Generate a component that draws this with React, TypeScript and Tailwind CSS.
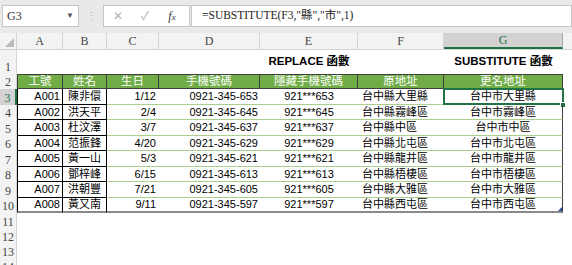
const SANS = "font-['Liberation_Sans','Noto_Sans_CJK_TC',sans-serif]"
const SERIF = "font-['Liberation_Serif','Noto_Sans_CJK_TC',serif]"

const COLS = [
  { key: 'A', w: 'w-[46px]' },
  { key: 'B', w: 'w-[44px]' },
  { key: 'C', w: 'w-[52px]' },
  { key: 'D', w: 'w-[101px]' },
  { key: 'E', w: 'w-[98px]' },
  { key: 'F', w: 'w-[86px]' },
  { key: 'G', w: 'w-[119px]' },
]

const HEADERS = ['工號', '姓名', '生日', '手機號碼', '隱藏手機號碼', '原地址', '更名地址']

const ROWS = [
  ['A001', '陳非儇', '1/12', '0921-345-653', '921***653', '台中縣大里縣', '台中市大里縣'],
  ['A002', '洪天平', '2/4', '0921-345-645', '921***645', '台中縣霧峰區', '台中市霧峰區'],
  ['A003', '杜汶澤', '3/7', '0921-345-637', '921***637', '台中縣中區', '台中市中區'],
  ['A004', '范振鋒', '4/20', '0921-345-629', '921***629', '台中縣北屯區', '台中市北屯區'],
  ['A005', '黃一山', '5/3', '0921-345-621', '921***621', '台中縣龍井區', '台中市龍井區'],
  ['A006', '鄧梓峰', '6/15', '0921-345-613', '921***613', '台中縣梧棲區', '台中市梧棲區'],
  ['A007', '洪朝豐', '7/21', '0921-345-605', '921***605', '台中縣大雅區', '台中市大雅區'],
  ['A008', '黃又南', '9/11', '0921-345-597', '921***597', '台中縣西屯區', '台中市西屯區'],
]

// row heights for rows 3..10 then 11..14
const DATA_H = ['h-[16px]', 'h-[15px]', 'h-[16px]', 'h-[15px]', 'h-[16px]', 'h-[15px]', 'h-[16px]', 'h-[15px]']
const EMPTY_H = ['h-[16px]', 'h-[15px]', 'h-[15px]', 'h-[15px]']

function RowHead({ n, h, active }: { n: number; h: string; active?: boolean }) {
  return (
    <div
      className={`w-[17px] shrink-0 ${h} flex items-end justify-center text-[12px] leading-[14px] ${SERIF} ${
        active
          ? 'bg-[#d2d2d2] text-[#217346] border-r-2 border-[#217346]'
          : 'bg-[#f3f3f3] text-[#444] border-r border-[#d4d4d4]'
      }`}
    >
      {n}
    </div>
  )
}

function FormulaBar() {
  return (
    <div className="h-[33px] bg-[#e9e9e9] flex items-start pt-[5px] pl-[2px]">
      <div className="w-[77px] h-[22px] bg-white border border-[#c6c6c6] flex items-center justify-between pl-[4px] pr-[4px]">
        <span className={`text-[12px] text-[#333] ${SERIF}`}>G3</span>
        <span className="text-[8px] text-[#555]">▼</span>
      </div>
      <div className="w-[24px] h-[22px] flex items-center justify-center text-[11px] text-[#b5b5b5]">⋮</div>
      <div className="w-[87px] h-[22px] bg-white border border-[#c6c6c6] flex items-center">
        <span className="w-[28px] text-center text-[12px] text-[#b0b0b0]">✕</span>
        <span className="w-[26px] text-center text-[12px] text-[#b0b0b0]">✓</span>
        <span className={`w-[28px] text-center text-[12px] text-[#333] italic ${SERIF}`}>
          f<span className="text-[9px]">x</span>
        </span>
      </div>
      <div className="flex-1 h-[22px] ml-[1px] bg-white border border-[#c6c6c6] flex items-center pl-[10px]">
        <span className={`text-[11.5px] text-[#222] ${SERIF}`}>=SUBSTITUTE(F3,"縣","市",1)</span>
      </div>
    </div>
  )
}

function ColumnHeads() {
  return (
    <div className={`h-[17px] flex bg-[#f3f3f3] border-b border-[#d4d4d4] ${SERIF}`}>
      <div className="w-[17px] shrink-0 border-r border-[#d4d4d4] relative">
        <div className="absolute right-[2px] bottom-[2px] w-0 h-0 border-l-[9px] border-l-transparent border-b-[9px] border-b-[#b9b9b9]" />
      </div>
      {COLS.map(c => (
        <div
          key={c.key}
          className={`${c.w} shrink-0 flex items-center justify-center text-[12px] border-r ${
            c.key === 'G'
              ? 'bg-[#d2d2d2] text-[#217346] border-[#ababab] border-b-2 border-b-[#217346]'
              : 'text-[#444] border-[#d4d4d4]'
          }`}
        >
          {c.key}
        </div>
      ))}
      <div className="flex-1" />
    </div>
  )
}

export default function App() {
  return (
    <div className={`w-[572px] h-[265px] overflow-hidden bg-white ${SANS}`}>
      <FormulaBar />
      <ColumnHeads />

      {/* row 1: titles */}
      <div className="flex h-[24px]">
        <RowHead n={1} h="h-[24px]" />
        {COLS.map(c => (
          <div key={c.key} className={`${c.w} shrink-0 flex items-center justify-center text-[11.5px] font-bold text-black`}>
            {c.key === 'E' && 'REPLACE 函數'}
            {c.key === 'G' && 'SUBSTITUTE 函數'}
          </div>
        ))}
      </div>

      {/* row 2: green header */}
      <div className="flex h-[15px]">
        <RowHead n={2} h="h-[15px]" />
        {COLS.map((c, i) => (
          <div
            key={c.key}
            className={`${c.w} shrink-0 h-[15px] flex items-center justify-center bg-[#70ad47] text-white text-[11.5px] leading-[13px] border-y border-r border-[#3f3f3f] ${
              i === 0 ? 'border-l' : ''
            }`}
          >
            {HEADERS[i]}
          </div>
        ))}
      </div>

      {/* rows 3-10 */}
      {ROWS.map((r, ri) => {
        const h = DATA_H[ri]
        const last = ri === ROWS.length - 1
        const soft = last ? 'border-b-2 border-b-[#8a8a8a]' : 'border-b border-b-[#a9d08e]'
        const hard = last ? 'border-b-2 border-b-[#8a8a8a]' : 'border-b border-b-black'
        return (
          <div key={r[0]} className={`flex ${h} text-[11px] text-black`}>
            <RowHead n={ri + 3} h={h} active={ri === 0} />
            <div className={`w-[46px] shrink-0 flex items-center justify-end pr-[2px] border-x border-black ${hard}`}>{r[0]}</div>
            <div className={`w-[44px] shrink-0 flex items-center justify-center border-r border-black ${hard}`}>{r[1]}</div>
            <div className={`w-[52px] shrink-0 flex items-center justify-end pr-[3px] ${soft}`}>{r[2]}</div>
            <div className={`w-[101px] shrink-0 flex items-center justify-end pr-[2px] ${soft}`}>{r[3]}</div>
            <div className={`w-[98px] shrink-0 flex items-center justify-center ${soft}`}>{r[4]}</div>
            <div className={`w-[86px] shrink-0 flex items-center justify-start pl-[4px] ${soft}`}>{r[5]}</div>
            <div className={`w-[119px] shrink-0 flex items-center justify-center border-r border-r-[#404040] relative ${soft}`}>
              {r[6]}
              {ri === 0 && (
                <>
                  <div className="absolute -left-px -top-px -right-[2px] -bottom-[1px] border-2 border-[#217346]" />
                  <div className="absolute -right-[4px] -bottom-[4px] w-[6px] h-[6px] bg-[#217346] border border-white" />
                </>
              )}
              {last && (
                <div className="absolute right-0 bottom-0 w-0 h-0 border-l-[4px] border-l-transparent border-b-[4px] border-b-[#1f4e9c]" />
              )}
            </div>
          </div>
        )
      })}

      {/* rows 11-14 */}
      {EMPTY_H.map((h, i) => (
        <div key={i} className={`flex ${h}`}>
          <RowHead n={11 + i} h={h} />
        </div>
      ))}
    </div>
  )
}
